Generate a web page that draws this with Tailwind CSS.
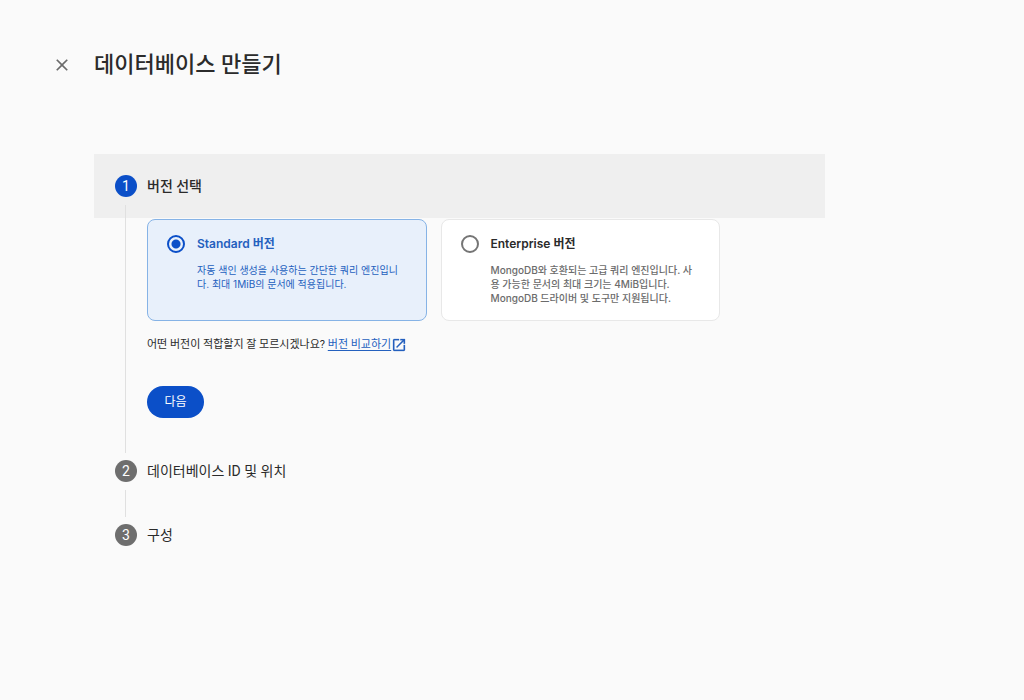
<!DOCTYPE html>
<html lang="ko">
<head>
    <meta charset="UTF-8" />
    <meta name="viewport" content="width=device-width, initial-scale=1.0"/>
    <title>데이터베이스 만들기</title>
    <script src="https://cdn.jsdelivr.net/npm/@tailwindcss/browser@4"></script>
</head>
<body class="min-h-screen bg-[#fafafa] font-['Roboto','Noto_Sans_CJK_KR',sans-serif] text-[#2b2b2b]">
    <!-- Header -->
    <header class="flex items-center gap-[22px] pl-[52px] pr-6 pt-12">
        <button type="button" aria-label="닫기" class="flex size-5 shrink-0 items-center justify-center text-[#6b6b6b]">
            <svg class="size-5" viewBox="0 0 24 24" fill="currentColor"><path d="M19 6.41 17.59 5 12 10.59 6.41 5 5 6.41 10.59 12 5 17.59 6.41 19 12 13.41 17.59 19 19 17.59 13.41 12z"/></svg>
        </button>
        <h1 class="text-[22px] leading-[34px] font-medium">데이터베이스 만들기</h1>
    </header>

    <!-- Stepper -->
    <main class="pl-[94px] pr-6 pt-[72px]">
        <ol class="max-w-[731px]">
            <li class="relative">
                <div class="flex h-16 items-center gap-[10px] bg-[#efefef] pl-[21px]">
                    <span class="flex size-[22px] items-center justify-center rounded-full bg-[#0b4fc8] text-sm text-white">1</span>
                    <h2 class="text-sm font-medium">버전 선택</h2>
                </div>
                <div class="absolute top-[51px] -bottom-[14px] left-[31px] w-px bg-[#e0e0e0]"></div>

                <form class="pl-[53px] pt-px pb-[21px]">
                    <div class="grid max-w-[573px] grid-cols-2 gap-[14px] font-['Inter','Noto_Sans_CJK_KR',sans-serif]">
                        <label class="flex min-h-[102px] gap-3 rounded-lg border border-[#86b3e6] bg-[#e8f0fb] py-[15px] pl-[19px] pr-5 text-[#2460be]">
                            <input type="radio" name="edition" value="standard" checked class="size-[18px] shrink-0 appearance-none rounded-full border-2 border-[#0b4fc8] bg-[radial-gradient(circle,#0b4fc8_4px,transparent_5px)]">
                            <span class="block">
                                <span class="block text-xs leading-[18px] font-semibold">Standard 버전</span>
                                <span class="mt-[10px] block text-[10px] leading-[14px]">자동 색인 생성을 사용하는 간단한 쿼리 엔진입니다. 최대 1MiB의 문서에 적용됩니다.</span>
                            </span>
                        </label>
                        <label class="flex min-h-[102px] gap-3 rounded-lg border border-[#e8e8e8] bg-white py-[15px] pl-[19px] pr-5">
                            <input type="radio" name="edition" value="enterprise" class="size-[18px] shrink-0 appearance-none rounded-full border-2 border-[#757575] bg-white">
                            <span class="block">
                                <span class="block text-xs leading-[18px] font-semibold">Enterprise 버전</span>
                                <span class="mt-[10px] block text-[10px] leading-[14px] font-medium text-[#6b6b6b]">MongoDB와 호환되는 고급 쿼리 엔진입니다. 사용 가능한 문서의 최대 크기는 4MiB입니다. MongoDB 드라이버 및 도구만 지원됩니다.</span>
                            </span>
                        </label>
                    </div>

                    <p class="mt-4 flex items-center text-[11px] leading-4">
                        <span>어떤 버전이 적합할지 잘 모르시겠나요?&nbsp;</span>
                        <a href="#" class="flex items-center text-[#2460be]">
                            <span class="underline underline-offset-2">버전 비교하기</span>
                            <svg class="size-4" viewBox="0 0 24 24" fill="currentColor" stroke="currentColor" stroke-width="0.4"><path d="M19 19H5V5h7V3H5a2 2 0 0 0-2 2v14a2 2 0 0 0 2 2h14c1.1 0 2-.9 2-2v-7h-2v7zM14 3v2h3.59l-9.83 9.83 1.41 1.41L19 6.41V10h2V3h-7z"/></svg>
                        </a>
                    </p>

                    <button type="button" class="mt-[33px] block h-8 w-[57px] rounded-full bg-[#0b4fc8] text-xs text-white">다음</button>
                </form>
            </li>

            <li class="relative">
                <div class="flex h-16 items-center gap-[10px] pl-[21px]">
                    <span class="flex size-[22px] items-center justify-center rounded-full bg-[#6e6e6e] text-sm text-white">2</span>
                    <h2 class="text-sm">데이터베이스 ID 및 위치</h2>
                </div>
                <div class="absolute top-[51px] -bottom-[14px] left-[31px] w-px bg-[#e0e0e0]"></div>
            </li>

            <li>
                <div class="flex h-16 items-center gap-[10px] pl-[21px]">
                    <span class="flex size-[22px] items-center justify-center rounded-full bg-[#6e6e6e] text-sm text-white">3</span>
                    <h2 class="text-sm">구성</h2>
                </div>
            </li>
        </ol>
    </main>
</body>
</html>
